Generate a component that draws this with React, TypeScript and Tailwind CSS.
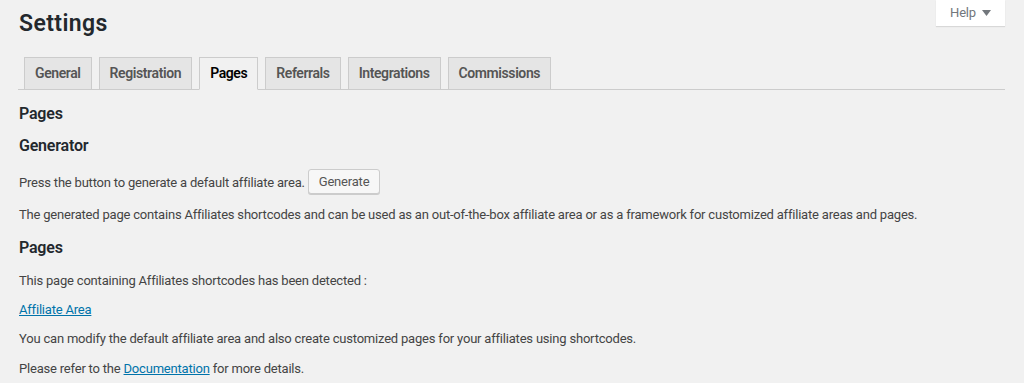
import React from 'react';

const tabs = ['General', 'Registration', 'Pages', 'Referrals', 'Integrations', 'Commissions'];

export default function App() {
  const active = 'Pages';

  return (
    <div className="relative h-[383px] w-full overflow-hidden bg-[#f1f1f1] pl-[19px] pr-[19px] font-['Roboto',sans-serif] text-[13px] tracking-[-0.2px] text-[#444]">
      {/* Header */}
      <div className="flex items-start justify-between">
        <h1 className="mt-[9px] text-[23px] font-semibold leading-[30px] tracking-[0.4px] text-[#23282d]">Settings</h1>
        <button className="flex h-[26px] w-[69px] items-center justify-center gap-[6px] bg-white text-[13px] text-[#72777c] shadow-[0_1px_1px_rgba(0,0,0,0.1)]">
          Help
          <svg width="9" height="6" viewBox="0 0 9 6">
            <path d="M0 0 L9 0 L4.5 6 Z" fill="#72777c" />
          </svg>
        </button>
      </div>

      {/* Tabs */}
      <nav className="ml-[-1px] mt-[18px] flex gap-[7px] border-b border-[#ccc] pl-[6px]">
        {tabs.map((t) => (
          <a
            key={t}
            className={
              t === active
                ? 'mb-[-1px] flex h-[33px] items-center border border-[#ccc] border-b-[#f1f1f1] bg-[#f1f1f1] px-[10px] text-[14px] font-semibold tracking-[-0.4px] text-black'
                : 'flex h-[32px] items-center border border-b-0 border-[#ccc] bg-[#e5e5e5] px-[10px] text-[14px] font-semibold tracking-[-0.4px] text-[#555]'
            }
          >
            {t}
          </a>
        ))}
      </nav>

      <h2 className="mt-[13px] text-[16px] font-semibold leading-[22px] text-[#23282d]">Pages</h2>
      <h2 className="mt-[10px] text-[16px] font-semibold leading-[22px] text-[#23282d]">Generator</h2>

      <div className="mt-[12px] flex h-[25px] items-center gap-[3px]">
        <span className="pt-[2px]">Press the button to generate a default affiliate area.</span>
        <button className="h-[25px] rounded-[3px] border border-[#ccc] bg-[#f7f7f7] px-[10px] text-[13px] text-[#555] shadow-[0_1px_0_#ccc]">
          Generate
        </button>
      </div>

      <p className="mt-[11px] leading-[20px]">
        The generated page contains Affiliates shortcodes and can be used as an out-of-the-box affiliate area or as a framework for customized affiliate areas and pages.
      </p>

      <h2 className="mt-[12px] text-[16px] font-semibold leading-[22px] text-[#23282d]">Pages</h2>
      <p className="mt-[12px] leading-[20px]">This page containing Affiliates shortcodes has been detected :</p>
      <p className="mt-[9px] leading-[20px]">
        <a className="text-[#0073aa] underline">Affiliate Area</a>
      </p>
      <p className="mt-[9px] leading-[20px]">
        You can modify the default affiliate area and also create customized pages for your affiliates using shortcodes.
      </p>
      <p className="mt-[10px] leading-[20px]">
        Please refer to the <a className="text-[#0073aa] underline">Documentation</a> for more details.
      </p>
    </div>
  );
}
